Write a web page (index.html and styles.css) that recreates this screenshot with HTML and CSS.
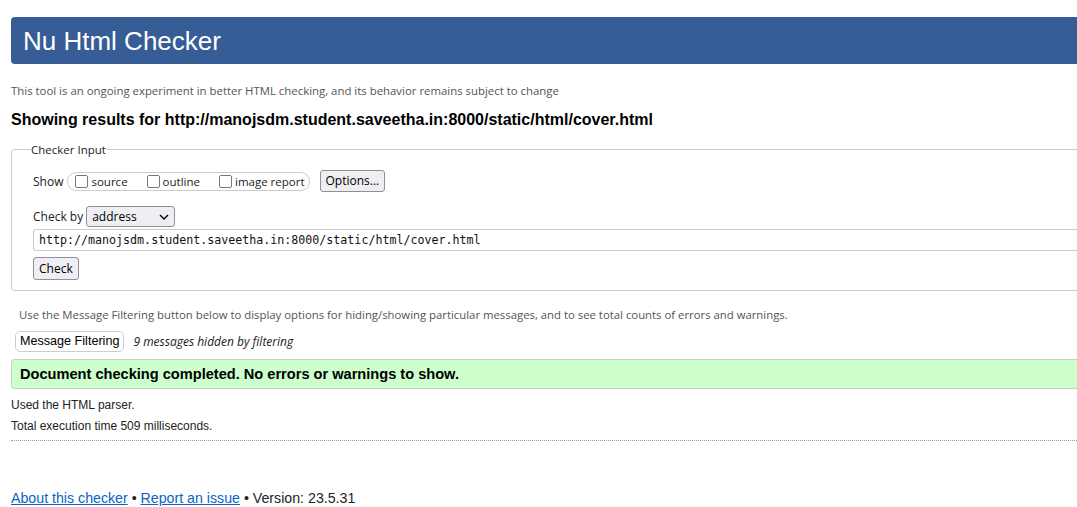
FILE: index.html
```html
<!DOCTYPE html>
<html lang="en">
<head>
<meta charset="utf-8">
<title>Nu Html Checker</title>
<link rel="stylesheet" href="styles.css">
</head>
<body>
<div class="page">
  <h1 class="banner">Nu Html Checker</h1>
  <p class="tagline">This tool is an ongoing experiment in better HTML checking, and its behavior remains subject to change</p>
  <h2 class="results">Showing results for http://manojsdm.student.saveetha.in:8000/static/html/cover.html</h2>
  <fieldset class="input-set">
    <legend>Checker Input</legend>
    <div class="show-row">
      <span class="lbl">Show</span>
      <span class="pill">
        <label class="opt"><span class="box"></span>source</label>
        <label class="opt"><span class="box"></span>outline</label>
        <label class="opt"><span class="box"></span>image report</label>
      </span>
      <button class="btn btn-options">Options...</button>
    </div>
    <div class="by-row">
      <span class="lbl">Check by</span>
      <span class="select">address
        <svg class="chev" width="10" height="6" viewBox="0 0 10 6"><path d="M1 1 L5 5 L9 1" fill="none" stroke="#000" stroke-width="1.4"/></svg>
      </span>
    </div>
    <div class="url">http://manojsdm.student.saveetha.in:8000/static/html/cover.html</div>
    <button class="btn btn-check">Check</button>
  </fieldset>
  <p class="filter-note">Use the Message Filtering button below to display options for hiding/showing particular messages, and to see total counts of errors and warnings.</p>
  <div class="filter-row">
    <button class="btn btn-filter">Message Filtering</button>
    <span class="hidden-count">9 messages hidden by filtering</span>
  </div>
  <p class="success">Document checking completed. No errors or warnings to show.</p>
  <p class="stat">Used the HTML parser.</p>
  <p class="stat">Total execution time 509 milliseconds.</p>
  <hr class="dotted">
  <p class="footer"><a href="#">About this checker</a> • <a href="#">Report an issue</a> • Version: 23.5.31</p>
</div>
</body>
</html>
```

FILE: styles.css
```css
html, body {
  margin: 0;
  padding: 0;
  background: #fff;
  overflow: hidden;
}
body {
  font-family: "Liberation Sans", Arial, sans-serif;
  color: #111;
}
.page {
  width: 1120px;
  padding: 17px 0 0 11px;
}
.banner {
  margin: 0;
  height: 47px;
  background: #365d95;
  color: #fff;
  border-radius: 4px;
  font-family: "Liberation Sans", Arial, sans-serif;
  font-weight: normal;
  font-size: 26px;
  line-height: 48px;
  padding-left: 12px;
}
.tagline {
  margin: 19px 0 0 0;
  font-family: "Open Sans", sans-serif;
  font-size: 11.4px;
  line-height: 16px;
  color: #555;
}
.results {
  margin: 11px 0 0 0;
  font-size: 16px;
  line-height: 20px;
  font-weight: bold;
  color: #000;
}
.input-set {
  margin: 12px 0 0 0;
  padding: 6px 0 10px 21px;
  border: 1px solid #ccc;
  border-right: none;
  border-radius: 4px 0 0 4px;
  font-family: "Open Sans", sans-serif;
  font-size: 12px;
}
.input-set legend {
  padding: 0;
  margin-left: -2px;
  color: #222;
  font-size: 11.5px;
}
.lbl { color: #222; }
.show-row, .by-row {
  display: flex;
  align-items: center;
}
.show-row { gap: 4px; margin-top: 7px; }
.pill {
  display: inline-flex;
  align-items: center;
  gap: 19px;
  height: 17px;
  padding: 0 4px 0 7px;
  border: 1px solid #ccc;
  border-radius: 9px;
}
.opt {
  display: inline-flex;
  align-items: center;
  gap: 3px;
  font-size: 11.5px;
  color: #222;
}
.box {
  display: inline-block;
  width: 13px;
  height: 13px;
  box-sizing: border-box;
  border: 1.5px solid #777;
  border-radius: 2px;
  background: #fff;
}
.btn {
  font-family: "Open Sans", sans-serif;
  font-size: 12px;
  color: #000;
  background: #efeff3;
  border: 1px solid #8f8f9d;
  border-radius: 3px;
  padding: 0 5px;
  height: 22px;
  line-height: 20px;
}
.btn-options { margin-left: 6px; }
.by-row { margin-top: 14px; gap: 3px; }
.select {
  display: inline-flex;
  align-items: center;
  justify-content: space-between;
  width: 77px;
  height: 19px;
  padding: 0 5px;
  border: 1px solid #8f8f9d;
  border-radius: 3px;
  background: #efeff3;
  font-size: 12px;
  color: #000;
}
.url {
  margin-top: 2px;
  height: 20px;
  line-height: 20px;
  border: 1px solid #ccc;
  border-right: none;
  border-radius: 3px 0 0 3px;
  padding-left: 5px;
  font-family: "DejaVu Sans Mono", monospace;
  font-size: 11.65px;
  color: #111;
}
.btn-check {
  display: block;
  margin-top: 6px;
  height: 23px;
}
.filter-note {
  margin: 16px 0 0 8px;
  font-family: "Open Sans", sans-serif;
  font-size: 11.35px;
  color: #555;
  line-height: 16px;
}
.filter-row {
  display: flex;
  align-items: center;
  gap: 9px;
  margin: 8px 0 0 4px;
}
.btn-filter {
  background: #fff;
  border: 1px solid #ccc;
  border-radius: 5px;
  height: 21px;
  line-height: 19px;
  font-family: "Liberation Sans", Arial, sans-serif;
  font-size: 12.6px;
  padding: 0 4px;
}
.hidden-count {
  font-family: "Open Sans", sans-serif;
  font-style: italic;
  font-size: 12px;
  color: #222;
}
.success {
  margin: 7px 0 0 0;
  height: 28px;
  line-height: 28px;
  background: #ccffcc;
  border: 1px solid #ccc;
  border-right: none;
  border-radius: 4px 0 0 4px;
  padding-left: 8px;
  font-weight: bold;
  font-size: 14.6px;
  color: #000;
}
.stat {
  margin: 9px 0 0 0;
  font-size: 12px;
  line-height: 14px;
  color: #222;
}
.stat + .stat { margin-top: 7px; }
.dotted {
  margin: 7px 0 0 0;
  border: none;
  border-top: 1px dotted #999;
  height: 0;
}
.footer {
  margin: 49px 0 0 0;
  font-size: 14.2px;
  line-height: 16px;
  color: #222;
}
.footer a {
  color: #0b63c5;
  text-decoration: underline;
}
```
